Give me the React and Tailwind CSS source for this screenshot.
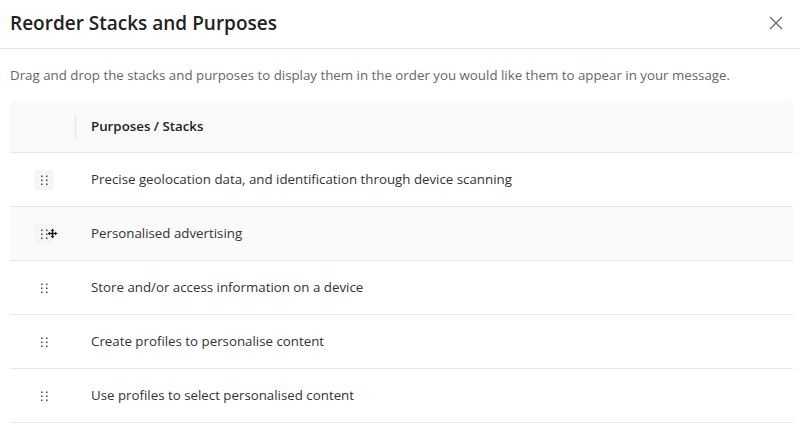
import React from 'react';

const rows = [
    'Precise geolocation data, and identification through device scanning',
    'Personalised advertising',
    'Store and/or access information on a device',
    'Create profiles to personalise content',
    'Use profiles to select personalised content',
];

const DragHandle = ({ active }) => (
    <div className={`w-5 h-5 flex items-center justify-center rounded ${active ? 'bg-[#f6f6f7]' : ''}`}>
        <svg width="10" height="12" viewBox="0 0 10 12" fill="#555">
            <rect x="2" y="1.5" width="1.6" height="1.6" />
            <rect x="7" y="1.5" width="1.6" height="1.6" />
            <rect x="2" y="5.5" width="1.6" height="1.6" />
            <rect x="7" y="5.5" width="1.6" height="1.6" />
            <rect x="2" y="9.5" width="1.6" height="1.6" />
            <rect x="7" y="9.5" width="1.6" height="1.6" />
        </svg>
    </div>
);

const MoveCursor = () => (
    <svg className="absolute left-[37px] top-[4px]" width="11" height="11" viewBox="0 0 11 11">
        <path d="M5.5 0.5 L8 3 H6.5 V4.5 H8 V3 L10.5 5.5 L8 8 V6.5 H6.5 V8 H8 L5.5 10.5 L3 8 H4.5 V6.5 H3 V8 L0.5 5.5 L3 3 V4.5 H4.5 V3 H3 Z" fill="#111" stroke="#fff" strokeWidth="0.6" />
    </svg>
);

const App = () => {
    return (
        <div className="w-[800px] h-[427px] bg-white overflow-hidden text-[#333]" style={{ fontFamily: '"Open Sans", sans-serif' }}>
            <div className="h-[49px] flex items-center justify-between px-[10px] border-b border-[#e5e5e5]">
                <h1 className="text-[19px] font-semibold text-[#222] leading-none -mt-[2px]">Reorder Stacks and Purposes</h1>
                <button className="w-6 h-6 flex items-center justify-center mr-[2px] -mt-[3px] text-[#666]">
                    <svg width="14" height="14" viewBox="0 0 14 14" stroke="currentColor" strokeWidth="1.3" fill="none">
                        <path d="M1 1 L13 13 M13 1 L1 13" />
                    </svg>
                </button>
            </div>
            <div className="px-[10px] pt-[16px]">
                <p className="text-[13.3px] text-[#666] leading-[20px]">
                    Drag and drop the stacks and purposes to display them in the order you would like them to appear in your message.
                </p>
                <div className="mt-[16px] mr-[-3px]">
                    <div className="h-[52px] flex items-center bg-[#f9f9fa] rounded-t-md border-b border-[#e6e6e6]">
                        <div className="w-[66px] h-[22px] border-r border-[#e3e3e3]" />
                        <div className="pl-[15px] text-[13.3px] font-semibold text-[#222]">Purposes / Stacks</div>
                    </div>
                    {rows.map((r, i) => (
                        <div key={r} className={`h-[54px] flex items-center border-b border-[#e6e6e6] ${i === 1 ? 'bg-[#fafafb]' : ''}`}>
                            <div className="w-[66px] flex justify-center pl-[1px] relative">
                                <DragHandle active={i < 2} />
                                {i === 1 && <MoveCursor />}
                            </div>
                            <div className="pl-[15px] text-[13.3px] text-[#333]">{r}</div>
                        </div>
                    ))}
                </div>
            </div>
        </div>
    );
};

export default App;
